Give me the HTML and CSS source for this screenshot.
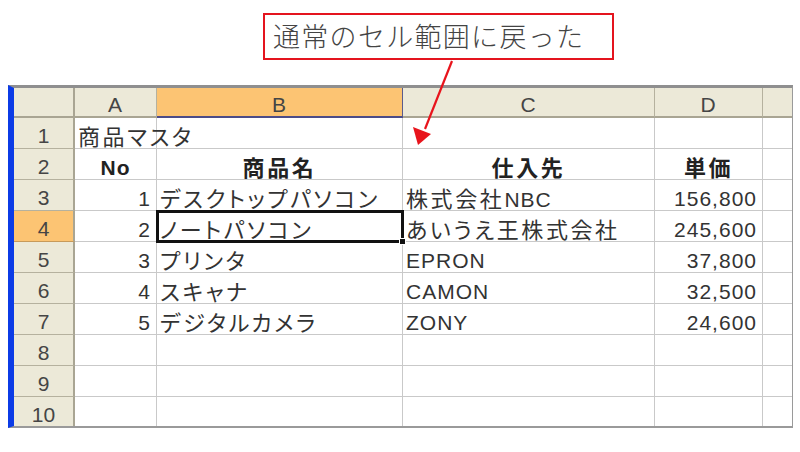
FILE: index.html
```html
<!DOCTYPE html>
<html lang="ja">
<head>
<meta charset="utf-8">
<title>商品マスタ</title>
<link rel="stylesheet" href="styles.css">
</head>
<body>
<div class="page">
  <div class="callout">通常のセル範囲に戻った</div>

  <div class="sheet">
    <div class="corner"></div>
    <div class="ch">A</div>
    <div class="ch sel-col">B</div>
    <div class="ch">C</div>
    <div class="ch">D</div>
    <div class="ch last"></div>

    <div class="rh">1</div>
    <div class="c j">商品マスタ</div>
    <div class="c"></div>
    <div class="c"></div>
    <div class="c"></div>
    <div class="c last"></div>

    <div class="rh">2</div>
    <div class="c ctr b lat">No</div>
    <div class="c ctr b j">商品名</div>
    <div class="c ctr b j">仕入先</div>
    <div class="c ctr b j">単価</div>
    <div class="c last"></div>

    <div class="rh">3</div>
    <div class="c num">1</div>
    <div class="c j">デスクトップパソコン</div>
    <div class="c j">株式会社<span class="in-lat">NBC</span></div>
    <div class="c num">156,800</div>
    <div class="c last"></div>

    <div class="rh sel-row">4</div>
    <div class="c num">2</div>
    <div class="c j active">ノートパソコン</div>
    <div class="c j">あいうえ王株式会社</div>
    <div class="c num">245,600</div>
    <div class="c last"></div>

    <div class="rh">5</div>
    <div class="c num">3</div>
    <div class="c j">プリンタ</div>
    <div class="c lat">EPRON</div>
    <div class="c num">37,800</div>
    <div class="c last"></div>

    <div class="rh">6</div>
    <div class="c num">4</div>
    <div class="c j">スキャナ</div>
    <div class="c lat">CAMON</div>
    <div class="c num">32,500</div>
    <div class="c last"></div>

    <div class="rh">7</div>
    <div class="c num">5</div>
    <div class="c j">デジタルカメラ</div>
    <div class="c lat">ZONY</div>
    <div class="c num">24,600</div>
    <div class="c last"></div>

    <div class="rh">8</div>
    <div class="c"></div><div class="c"></div><div class="c"></div><div class="c"></div><div class="c last"></div>
    <div class="rh">9</div>
    <div class="c"></div><div class="c"></div><div class="c"></div><div class="c"></div><div class="c last"></div>
    <div class="rh">10</div>
    <div class="c"></div><div class="c"></div><div class="c"></div><div class="c"></div><div class="c last"></div>
  </div>

  <svg class="arrow" width="800" height="452" viewBox="0 0 800 452">
    <line x1="452" y1="61" x2="425" y2="129" stroke="#e8141c" stroke-width="2.2"/>
    <polygon points="418,145 413,127 431,134" fill="#e8141c"/>
  </svg>
</div>
</body>
</html>
```
FILE: styles.css
```css
html, body {
  margin: 0;
  padding: 0;
  background: #fff;
}

.page {
  position: relative;
  width: 800px;
  height: 452px;
  overflow: hidden;
  padding-top: 13px;
  box-sizing: border-box;
  font-family: "Liberation Sans", "Noto Sans CJK JP", sans-serif;
  color: #333;
}

.callout {
  margin-left: 263px;
  width: 351px;
  height: 47px;
  box-sizing: border-box;
  border: 2px solid #e4141e;
  padding-left: 8px;
  font-family: "Noto Sans CJK JP", sans-serif;
  font-weight: 300;
  font-size: 27px;
  letter-spacing: 1.3px;
  line-height: 42px;
  color: #444;
  white-space: nowrap;
}

.sheet {
  margin: 25px 0 0 8px;
  width: 785px;
  height: 343px;
  box-sizing: border-box;
  border-left: 6px solid #0b3be6;
  border-top: 3px solid #8f8f8f;
  border-right: 1px solid #9a9a9a;
  border-bottom: 2px solid #9a9a9a;
  overflow: hidden;
  display: grid;
  grid-template-columns: 61px 82px 246px 252px 108px 1fr;
  grid-template-rows: 30px;
  grid-auto-rows: 31px;
  background: #fff;
}

.sheet > div {
  box-sizing: border-box;
  white-space: nowrap;
  min-width: 0;
}

.corner,
.ch {
  background: #ece9d8;
  border-right: 1px solid #b5b19e;
  border-bottom: 2px solid #a9a593;
  text-align: center;
  font-size: 21px;
  line-height: 28px;
  padding-top: 3px;
  letter-spacing: 1px;
  color: #454545;
}

.corner {
  border-right: 2px solid #a9a593;
}

.ch.last {
  border-right: none;
}

.sel-col {
  background: #fcc473;
  border-right: 1px solid #5b5b8c;
  border-bottom: 2px solid #4c4c88;
}

.rh {
  background: #ece9d8;
  border-right: 2px solid #a9a593;
  border-bottom: 1px solid #b5b19e;
  text-align: center;
  font-size: 21px;
  line-height: 30px;
  padding-top: 3px;
  color: #454545;
}

.sel-row {
  background: #fcc473;
  border-bottom-color: #c79a5a;
}

.c {
  border-right: 1px solid #c9c9c9;
  border-bottom: 1px solid #c9c9c9;
  padding: 0 3px;
  font-size: 21px;
  line-height: 30px;
  letter-spacing: 1px;
}

.c.last {
  border-right: none;
}

.j {
  font-family: "Noto Sans CJK JP", sans-serif;
  font-size: 22px;
  letter-spacing: 2.6px;
  font-feature-settings: "palt" 1;
  padding-top: 2px;
}

.in-lat {
  font-family: "Liberation Sans", sans-serif;
  font-size: 21px;
  letter-spacing: 1px;
}

.lat,
.num {
  padding-top: 4px;
}

.ctr {
  text-align: center;
}

.b {
  font-weight: bold;
  color: #222;
}

.num {
  text-align: right;
  padding-right: 5px;
}

.active {
  position: relative;
  outline: 3px solid #111;
  outline-offset: -2px;
}

.active::after {
  content: "";
  position: absolute;
  right: -4px;
  bottom: -4px;
  width: 5px;
  height: 5px;
  background: #111;
  border: 1px solid #fff;
}

.arrow {
  position: absolute;
  left: 0;
  top: 0;
  pointer-events: none;
}
```
